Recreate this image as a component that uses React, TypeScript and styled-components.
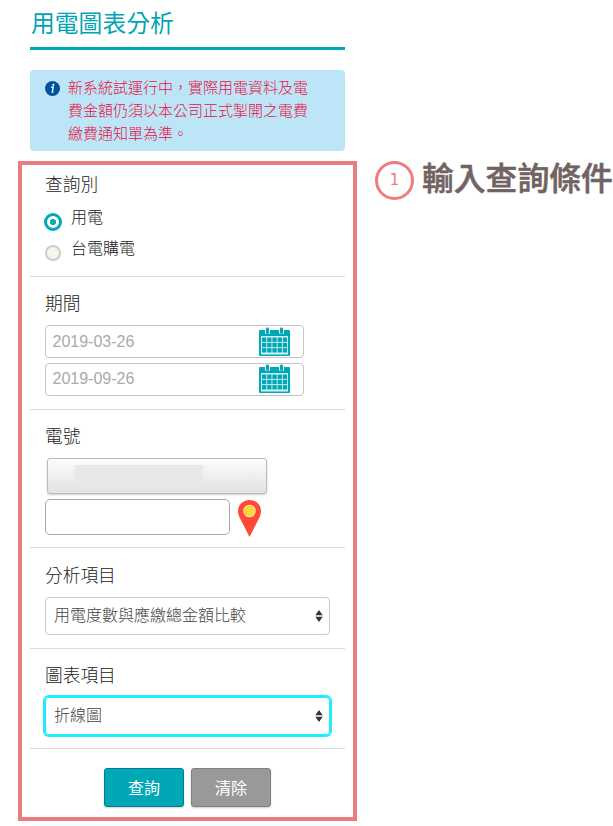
import React from "react";
import styled, { createGlobalStyle, css } from "styled-components";

const Global = createGlobalStyle`
  *, *::before, *::after { box-sizing: border-box; }
  body {
    margin: 0;
    background: #fff;
    color: #222;
    font-family: "Liberation Sans", "Noto Sans CJK TC", sans-serif;
    font-size: 16px;
    font-weight: 300;
  }
`;

const Page = styled.main`
  display: flex;
  align-items: flex-start;
  width: 613px;
  height: 826px;
  overflow: hidden;
`;

const Column = styled.div`
  flex: none;
  width: 339px;
  margin-left: 18px;
`;

const Title = styled.h1`
  height: 50px;
  margin: 0 12px 20px;
  padding-left: 1px;
  border-bottom: 3px solid #00a9b7;
  color: #00a5b5;
  font-size: 23.8px;
  font-weight: 400;
  line-height: 47px;
`;

const Notice = styled.div`
  display: flex;
  height: 81px;
  margin: 0 12px 10px;
  padding: 6px 15px 0;
  border-radius: 4px;
  background: #bde5f8;
  color: #e8103f;
  font-size: 15px;
  line-height: 23px;
`;

const NoticeIcon = styled.svg`
  flex: none;
  width: 15px;
  height: 15px;
  margin: 5px 8px 0 0;
`;

const NoticeText = styled.p`
  width: 245px;
  margin: 0;
`;

const Panel = styled.form`
  height: 660px;
  padding: 0 8px;
  border: 4px solid #ec7d7d;
`;

const Section = styled.section<{ $height: number; $top: number }>`
  height: ${(p) => p.$height}px;
  padding: ${(p) => p.$top}px 15px 0;
  border-bottom: 1px solid #dadada;
`;

const Label = styled.h2<{ $gap: number }>`
  height: 26px;
  margin: 0 0 ${(p) => p.$gap}px;
  font-size: 17.7px;
  font-weight: 300;
  line-height: 26px;
`;

const RadioRow = styled.label`
  display: flex;
  height: 31px;
  line-height: 24px;
`;

const RadioSlot = styled.span<{ $top: number }>`
  display: flex;
  justify-content: center;
  width: 18px;
  margin: 0 9px 0 -1px;
  padding-top: ${(p) => p.$top}px;
`;

const Radio = styled.span<{ $checked?: boolean }>`
  display: block;
  width: 16px;
  height: 16px;
  border: 2px solid #ccc;
  border-radius: 50%;
  background: #f5f5ee;
  ${(p) =>
    p.$checked &&
    css`
      flex: none;
      width: 18px;
      height: 18px;
      border: 3px solid #00a9b7;
      background: radial-gradient(circle, #00a9b7 2.7px, #fff 3.5px);
    `}
`;

const DateField = styled.div<{ $bottom: number }>`
  display: flex;
  align-items: center;
  justify-content: space-between;
  width: 259px;
  height: 33px;
  margin-bottom: 5px;
  padding: 0 13px ${(p) => p.$bottom}px 6.5px;
  border: 1px solid #c4c4c4;
  border-radius: 4px;
  color: #aaa;
  font-weight: 400;
`;

const CalendarSvg = styled.svg`
  width: 31px;
  height: 29px;
`;

const MeterButton = styled.div`
  width: 220px;
  height: 36px;
  margin: 0 0 5px 2px;
  padding: 6px 27px;
  border: 1px solid #bbb;
  border-radius: 3px;
  background: linear-gradient(#fcfcfc, #e2e2e2);
  box-shadow: 0 1px 2px rgba(0, 0, 0, 0.2);
`;

const Mask = styled.div`
  width: 128px;
  height: 20px;
  background: #e8e8e8;
`;

const MeterRow = styled.div`
  display: flex;
  gap: 8px;
`;

const MeterInput = styled.input`
  width: 185px;
  height: 36px;
  border: 1px solid #aaa;
  border-radius: 5px;
  background: #fff;
`;

const PinSvg = styled.svg`
  width: 23px;
  height: 38px;
`;

const SelectBox = styled.div<{ $focused?: boolean }>`
  display: flex;
  align-items: center;
  justify-content: space-between;
  width: 285px;
  height: 38px;
  padding: 0 6px 0 8px;
  border: 1px solid #c8c8c8;
  border-radius: 4px;
  color: #444;
  line-height: 22px;
  ${(p) =>
    p.$focused &&
    css`
      border-color: #1cecff;
      box-shadow: 0 0 0 2px #1cecff;
    `}
`;

const Actions = styled.div`
  display: flex;
  justify-content: center;
  gap: 7px;
  padding-top: 19px;
`;

const Button = styled.button<{ $muted?: boolean }>`
  width: 80px;
  height: 39px;
  padding: 0 0 2px;
  border: 1px solid ${(p) => (p.$muted ? "#808080" : "#007d89")};
  border-radius: 3px;
  background: ${(p) => (p.$muted ? "#999" : "#00a7b7")};
  box-shadow: 0 1px 2px rgba(0, 0, 0, 0.2);
  color: #fff;
  font: inherit;
  font-weight: 400;
`;

const Step = styled.aside`
  display: flex;
  flex: none;
  align-items: flex-start;
  gap: 8px;
  height: 39px;
  margin: 161px 0 0 18px;
  color: #726363;
  font-size: 31.8px;
  font-weight: 500;
  white-space: nowrap;
`;

const StepNumber = styled.span`
  flex: none;
  width: 39px;
  height: 39px;
  border: 3px solid #ef7d7d;
  border-radius: 50%;
  color: #ec7d7d;
  font: 15px/33px "DejaVu Sans", sans-serif;
  text-align: center;
`;

const StepText = styled.span`
  line-height: 36px;
  -webkit-text-stroke: 0.6px #726363;
`;

function InfoIcon() {
  return (
    <NoticeIcon viewBox="0 0 15 15">
      <circle cx="7.5" cy="7.5" r="7.5" fill="#00529b" />
      <circle cx="8.3" cy="3.8" r="1.1" fill="#fff" />
      <path d="M6 6.2h2.3L7.2 11h1.2" fill="none" stroke="#fff" strokeWidth="1.3" />
    </NoticeIcon>
  );
}

function CalendarIcon() {
  return (
    <CalendarSvg viewBox="0 0 31 29">
      <path d="M1 3h29a1 1 0 0 1 1 1v24a1 1 0 0 1-1 1H1a1 1 0 0 1-1-1V4a1 1 0 0 1 1-1z" fill="#00a7b7" />
      <path d="M6 0h5v6.5H6zM20 0h5v6.5h-5z" fill="#fff" />
      <rect x="7" y="0.5" width="3" height="6" rx="1.3" fill="#00a7b7" />
      <rect x="21" y="0.5" width="3" height="6" rx="1.3" fill="#00a7b7" />
      <rect x="2" y="9" width="27" height="18.5" fill="#d5f2f4" />
      {[10.5, 15.8, 21.1].flatMap((y) =>
        [3, 8.2, 13.4, 18.6, 23.8].map((x) => (
          <rect key={`${x}-${y}`} x={x} y={y} width="4.3" height="4.4" fill="#00a7b7" />
        )),
      )}
    </CalendarSvg>
  );
}

function PinIcon() {
  return (
    <PinSvg viewBox="0 0 23 38">
      <path d="M11.5 1C5 1 0 6 0 12.3c0 2.200.6 4.100 1.500 6L11.500 38 21.500 18.300c.9-1.900 1.500-3.800 1.500-6C23 6 18 1 11.500 1z" fill="#ff4838" />
      <circle cx="11.500" cy="12" r="5.700" fill="#ffc717" stroke="#f3e3c4" strokeWidth="1.200" />
      <circle cx="12" cy="12.400" r="4.500" fill="#fadc31" />
    </PinSvg>
  );
}

function SortArrows() {
  return (
    <svg width="8" height="12" viewBox="0 0 8 12">
      <path d="M4 0l3.700 5.200h-7.400zM4 12l3.700-5.200h-7.400z" fill="#333" />
    </svg>
  );
}

export default function App() {
  return (
    <>
      <Global />
      <Page>
        <Column>
          <Title>用電圖表分析</Title>
          <Notice>
            <InfoIcon />
            <NoticeText>新系統試運行中，實際用電資料及電費金額仍須以本公司正式掣開之電費繳費通知單為準。</NoticeText>
          </Notice>
          <Panel>
            <Section $height={112} $top={7}>
              <Label $gap={8}>查詢別</Label>
              <RadioRow>
                <RadioSlot $top={7}><Radio $checked /></RadioSlot>
                用電
              </RadioRow>
              <RadioRow>
                <RadioSlot $top={8}><Radio /></RadioSlot>
                台電購電
              </RadioRow>
            </Section>
            <Section $height={133} $top={14}>
              <Label $gap={8}>期間</Label>
              <DateField $bottom={0}>2019-03-26<CalendarIcon /></DateField>
              <DateField $bottom={2}>2019-09-26<CalendarIcon /></DateField>
            </Section>
            <Section $height={138} $top={14}>
              <Label $gap={8}>電號</Label>
              <MeterButton><Mask /></MeterButton>
              <MeterRow>
                <MeterInput />
                <PinIcon />
              </MeterRow>
            </Section>
            <Section $height={101} $top={15}>
              <Label $gap={8}>分析項目</Label>
              <SelectBox>用電度數與應繳總金額比較<SortArrows /></SelectBox>
            </Section>
            <Section $height={100} $top={14}>
              <Label $gap={8}>圖表項目</Label>
              <SelectBox $focused>折線圖<SortArrows /></SelectBox>
            </Section>
            <Actions>
              <Button type="button">查詢</Button>
              <Button type="button" $muted>清除</Button>
            </Actions>
          </Panel>
        </Column>
        <Step>
          <StepNumber>1</StepNumber>
          <StepText>輸入查詢條件</StepText>
        </Step>
      </Page>
    </>
  );
}
